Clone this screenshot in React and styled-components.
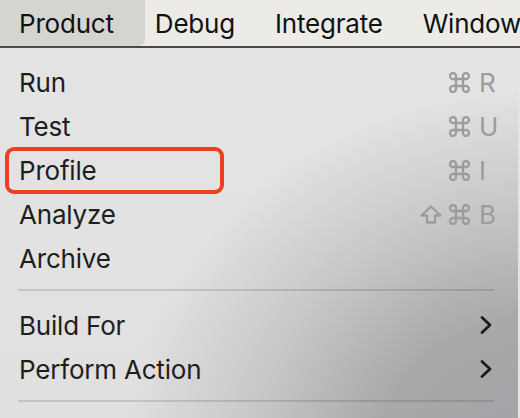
import React from "react";
import styled, { createGlobalStyle } from "styled-components";

const Global = createGlobalStyle`
  html, body { margin: 0; padding: 0; }
  body {
    width: 520px;
    height: 418px;
    overflow: hidden;
    background: #e4e4e4;
    font-family: Inter, "Noto Sans", "DejaVu Sans", sans-serif;
    -webkit-font-smoothing: antialiased;
  }
`;

const Screen = styled.div`
  width: 520px;
  height: 418px;
  display: flex;
  flex-direction: column;
  overflow: hidden;
`;

const MenuBar = styled.div`
  display: flex;
  align-items: stretch;
  height: 48px;
  flex: none;
  background: #ecebe7;
  border-bottom: 2px solid #4a4a48;
  box-sizing: border-box;
  white-space: nowrap;
`;

const MenuTitle = styled.div`
  display: flex;
  align-items: center;
  padding: 1px ${(p) => (p.$active ? "31px" : "30px")} 0 ${(p) => (p.$active ? "19px" : "10px")};
  font-size: 26px;
  color: #111;
  letter-spacing: -0.2px;
  background: ${(p) => (p.$active ? "#d4d4d0" : "transparent")};
  border-bottom-right-radius: ${(p) => (p.$active ? "7px" : "0")};
`;

const Dropdown = styled.div`
  flex: 1;
  display: flex;
  flex-direction: column;
  padding: 12px 0 0;
  margin-right: 2px;
  border-top-right-radius: 10px;
  background:
    radial-gradient(ellipse 420px 380px at 540px 420px, #a2a2a6 0%, #a9a9ac 40%, #c8c8ca 70%, rgba(226,226,226,0) 100%),
    linear-gradient(180deg, #e4e4e4 0%, #e0e0e0 100%);
`;

const Row = styled.div`
  position: relative;
  display: flex;
  align-items: center;
  justify-content: space-between;
  height: 44px;
  padding: 0 23px 0 19px;
  font-size: 26px;
  color: #1e1e1e;
  letter-spacing: -0.2px;
`;

const Highlight = styled.div`
  position: absolute;
  left: 5px;
  top: -1px;
  width: 219px;
  height: 47px;
  border: 4.5px solid #ee4020;
  border-radius: 9px;
  box-sizing: border-box;
`;

const Shortcut = styled.div`
  display: flex;
  align-items: center;
  gap: 7px;
  color: #9c9c9c;
  font-size: 26px;
`;

const Key = styled.span`
  display: inline-block;
  width: 16px;
  margin-left: 2px;
  text-align: left;
`;

const ChevronBox = styled.div`
  display: flex;
  margin-right: 3px;
`;

const Separator = styled.div`
  height: 2px;
  margin: ${(p) => p.$m};
  margin-left: 18px;
  margin-right: 24px;
  background: rgba(0, 0, 0, 0.12);
`;

const Cmd = () => (
  <svg width="21" height="21" viewBox="0 0 21 21" fill="none" stroke="#9c9c9c" strokeWidth="2.3">
    <path d="M7 7 H14 V14 H7 Z" />
    <path d="M7 7 H4.5 A3 3 0 1 1 7 4.5 V7" />
    <path d="M14 7 V4.5 A3 3 0 1 1 16.5 7 H14" />
    <path d="M7 14 V16.5 A3 3 0 1 1 4.5 14 H7" />
    <path d="M14 14 H16.5 A3 3 0 1 1 14 16.5 V14" />
  </svg>
);

const Shift = () => (
  <svg width="22" height="19" viewBox="0 0 22 19" fill="none" stroke="#9c9c9c" strokeWidth="2.3" strokeLinejoin="round">
    <path d="M11 1.5 L20.5 10.5 H15 V17.5 H7 V10.5 H1.5 Z" />
  </svg>
);

const Chevron = () => (
  <ChevronBox>
    <svg width="12" height="20" viewBox="0 0 12 20" fill="none" stroke="#1c1c1c" strokeWidth="2.8" strokeLinecap="round" strokeLinejoin="round">
      <path d="M2 2.5 L10 10 L2 17.5" />
    </svg>
  </ChevronBox>
);

const items = [
  { label: "Run", key: "R" },
  { label: "Test", key: "U" },
  { label: "Profile", key: "I", hl: true },
  { label: "Analyze", key: "B", shift: true },
  { label: "Archive" },
];

export default function App() {
  return (
    <>
      <Global />
      <Screen>
        <MenuBar>
          <MenuTitle $active>Product</MenuTitle>
          <MenuTitle>Debug</MenuTitle>
          <MenuTitle>Integrate</MenuTitle>
          <MenuTitle>Window</MenuTitle>
        </MenuBar>
        <Dropdown>
          {items.map((it) => (
            <Row key={it.label}>
              {it.hl && <Highlight />}
              <span>{it.label}</span>
              {it.key && (
                <Shortcut>
                  {it.shift && <Shift />}
                  <Cmd />
                  <Key>{it.key}</Key>
                </Shortcut>
              )}
            </Row>
          ))}
          <Separator $m="9px 0 12px" />
          <Row>
            <span>Build For</span>
            <Chevron />
          </Row>
          <Row>
            <span>Perform Action</span>
            <Chevron />
          </Row>
          <Separator $m="9px 0 0" />
        </Dropdown>
      </Screen>
    </>
  );
}
